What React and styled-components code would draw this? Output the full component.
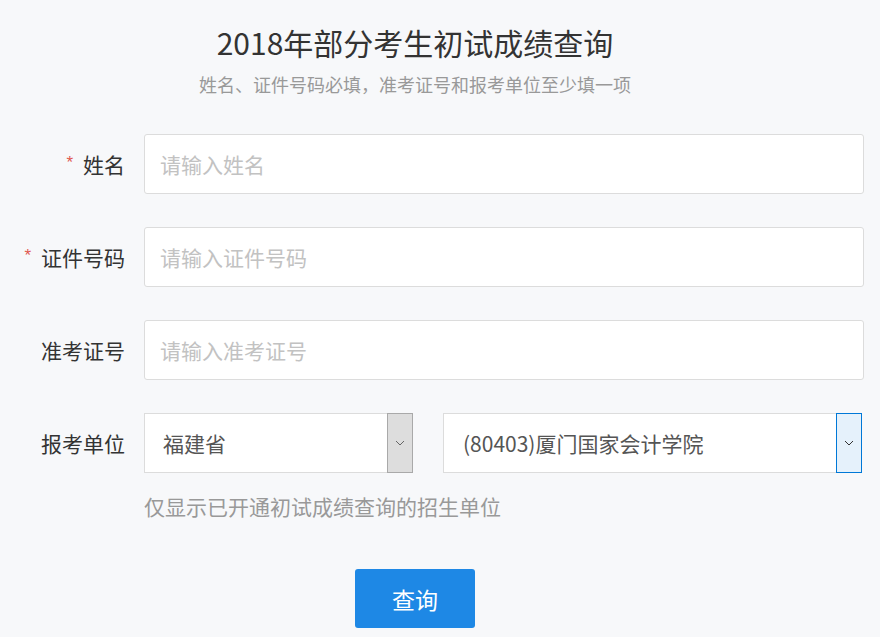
import React from "react";
import styled, { createGlobalStyle } from "styled-components";

const Global = createGlobalStyle`
  html, body { margin: 0; padding: 0; background: #f7f8fa; }
  body { font-family: "Noto Sans CJK SC", "Noto Sans", "Liberation Sans", sans-serif; }
  * { box-sizing: border-box; }
`;

const Page = styled.div`
  width: 880px;
  min-height: 637px;
  padding-top: 22px;
  background: #f7f8fa;
`;

const Header = styled.div`
  width: 830px;
  text-align: center;
`;

const Title = styled.h1`
  margin: 0;
  font-size: 30px;
  line-height: 40px;
  font-weight: 400;
  color: #333;
`;

const Subtitle = styled.p`
  margin: 10px 0 0;
  font-size: 18px;
  line-height: 24px;
  color: #999;
`;

const Form = styled.div`
  margin-top: 38px;
  width: 864px;
  display: flex;
  flex-direction: column;
  gap: 33px;
`;

const Row = styled.div`
  display: grid;
  grid-template-columns: 125px 720px;
  column-gap: 19px;
  align-items: center;
`;

const Label = styled.label`
  display: flex;
  justify-content: flex-end;
  align-items: center;
  gap: 10px;
  font-size: 21px;
  line-height: 60px;
  color: #333;
`;

const Star = styled.span`
  color: #e05a50;
  font-family: "Liberation Sans", sans-serif;
  font-size: 17px;
  line-height: 1;
  transform: translateY(-2px);
`;

const Input = styled.input`
  width: 720px;
  height: 60px;
  border: 1px solid #dcdcdc;
  border-radius: 3px;
  background: #fff;
  padding: 0 15px;
  font-family: inherit;
  font-size: 21px;
  color: #555;
  outline: none;
  &::placeholder { color: #c2c2c2; }
`;

const Selects = styled.div`
  display: flex;
  gap: 30px;
`;

const Select = styled.div`
  width: ${p => p.$w}px;
  height: 60px;
  display: flex;
  align-items: stretch;
  background: #fff;
  border: 1px solid #dcdcdc;
  border-right: none;
`;

const SelectValue = styled.span`
  flex: 1;
  display: flex;
  align-items: center;
  padding-left: ${p => p.$pad}px;
  font-size: 21px;
  color: #555;
  white-space: nowrap;
`;

const Arrow = styled.span`
  width: 26px;
  margin: -1px 0;
  display: flex;
  align-items: center;
  justify-content: center;
  background: ${p => (p.$active ? "#e5f1fb" : "#dddddd")};
  border: 1px solid ${p => (p.$active ? "#0078d7" : "#a9a9a9")};
`;

const Hint = styled.p`
  margin: -15px 0 0 144px;
  font-size: 21px;
  line-height: 30px;
  color: #999;
`;

const ButtonWrap = styled.div`
  width: 830px;
  display: flex;
  justify-content: center;
  margin-top: 48px;
`;

const Button = styled.button`
  width: 120px;
  height: 59px;
  border: none;
  border-radius: 3px;
  background: #1e88e5;
  color: #fff;
  font-family: inherit;
  font-size: 23px;
  cursor: pointer;
`;

const Chevron = ({ color }) => (
  <svg width="10" height="6" viewBox="0 0 10 6">
    <path d="M1 1 L5 5 L9 1" fill="none" stroke={color} strokeWidth="1" />
  </svg>
);

export default function App() {
  return (
    <>
      <Global />
      <Page>
        <Header>
          <Title>2018年部分考生初试成绩查询</Title>
          <Subtitle>姓名、证件号码必填，准考证号和报考单位至少填一项</Subtitle>
        </Header>
        <Form>
          <Row>
            <Label><Star>*</Star>姓名</Label>
            <Input placeholder="请输入姓名" />
          </Row>
          <Row>
            <Label><Star>*</Star>证件号码</Label>
            <Input placeholder="请输入证件号码" />
          </Row>
          <Row>
            <Label>准考证号</Label>
            <Input placeholder="请输入准考证号" />
          </Row>
          <Row>
            <Label>报考单位</Label>
            <Selects>
              <Select $w={269}>
                <SelectValue $pad={18}>福建省</SelectValue>
                <Arrow><Chevron color="#666" /></Arrow>
              </Select>
              <Select $w={419}>
                <SelectValue $pad={19}>(80403)厦门国家会计学院</SelectValue>
                <Arrow $active><Chevron color="#333" /></Arrow>
              </Select>
            </Selects>
          </Row>
          <Hint>仅显示已开通初试成绩查询的招生单位</Hint>
        </Form>
        <ButtonWrap>
          <Button>查询</Button>
        </ButtonWrap>
      </Page>
    </>
  );
}
